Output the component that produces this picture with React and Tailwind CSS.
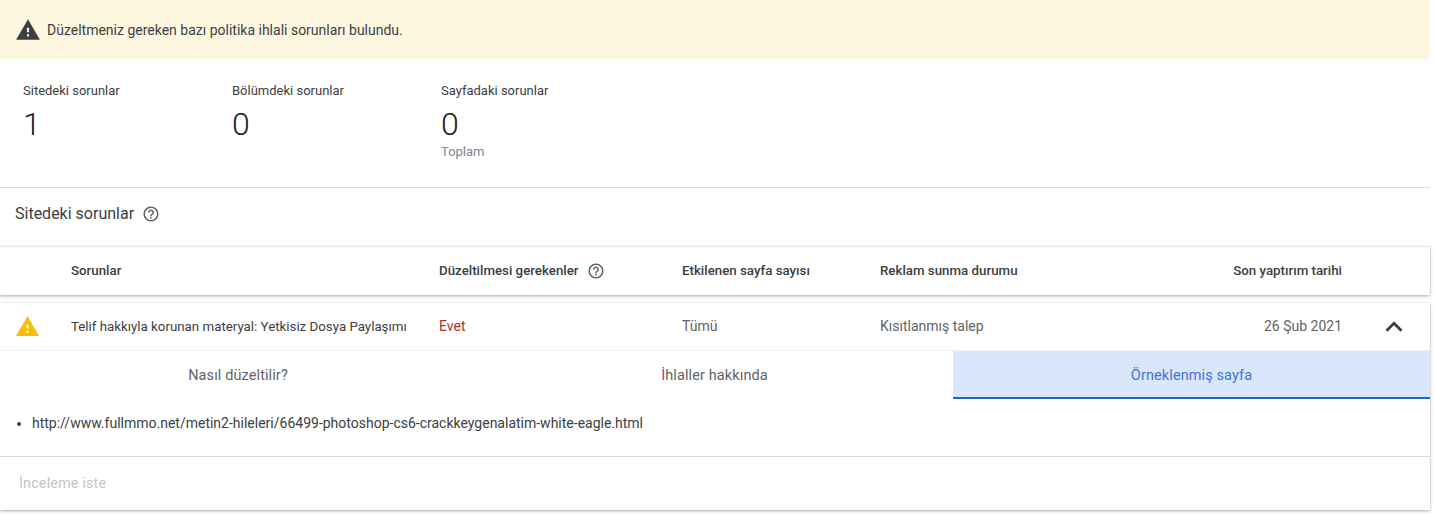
import React from 'react';

const Help = ({ className }) => (
  <svg viewBox="0 0 24 24" className={className} fill="#5f6368">
    <path d="M11 18h2v-2h-2v2zm1-16C6.48 2 2 6.48 2 12s4.48 10 10 10 10-4.48 10-10S17.52 2 12 2zm0 18c-4.41 0-8-3.59-8-8s3.59-8 8-8 8 3.59 8 8-3.59 8-8 8zm0-14c-2.21 0-4 1.79-4 4h2c0-1.1.9-2 2-2s2 .9 2 2c0 2-3 1.75-3 5h2c0-2.25 3-2.5 3-5 0-2.21-1.79-4-4-4z" />
  </svg>
);

const Warning = ({ fill, className }) => (
  <svg viewBox="0 0 24 24" className={className} fill={fill}>
    <path d="M1 21h22L12 2 1 21zm12-3h-2v-2h2v2zm0-4h-2v-4h2v4z" />
  </svg>
);

const Stat = ({ label, value, note }) => (
  <div className="w-[209px]">
    <div className="text-[13px] leading-[20px] text-[#3c4043]">{label}</div>
    <div className="mt-[3px] text-[32px] font-[350] leading-[40px] text-[#202124]">{value}</div>
    {note && <div className="text-[13px] leading-[16px] text-[#80868b]">{note}</div>}
  </div>
);

const App = () => {
  return (
    <div className="h-[516px] w-[1435px] overflow-hidden bg-white font-['Roboto',sans-serif]">
      <div className="w-[1430px]">
        <div className="flex h-[59px] items-center gap-[6px] bg-[#fef7e0] pl-[15px] text-[14px] text-[#3c4043]">
          <Warning fill="#3c4043" className="h-[26px] w-[26px]" />
          <span className="pt-[1px]">Düzeltmeniz gereken bazı politika ihlali sorunları bulundu.</span>
        </div>

        <div className="flex h-[129px] border-b border-[#dadce0] pl-[23px] pt-[22px]">
          <Stat label="Sitedeki sorunlar" value="1" />
          <Stat label="Bölümdeki sorunlar" value="0" />
          <Stat label="Sayfadaki sorunlar" value="0" note="Toplam" />
        </div>

        <div className="flex h-[59px] items-center gap-[8px] border-b border-[#f1f3f4] pb-[7px] pl-[15px] text-[16px] text-[#3c4043]">
          <span>Sitedeki sorunlar</span>
          <Help className="h-[18px] w-[18px]" />
        </div>

        <div className="flex h-[48px] items-center text-[13.3px] font-medium text-[#3c4043] shadow-[0_1px_3px_rgba(60,64,67,0.45)]">
          <div className="w-[439px] pl-[71px]">Sorunlar</div>
          <div className="flex w-[243px] items-center gap-[8px]">
            <span>Düzeltilmesi gerekenler</span>
            <Help className="h-[18px] w-[18px]" />
          </div>
          <div className="w-[198px]">Etkilenen sayfa sayısı</div>
          <div className="w-[200px]">Reklam sunma durumu</div>
          <div className="w-[262px] text-right">Son yaptırım tarihi</div>
        </div>

        <div className="mt-[8px] shadow-[0_1px_3px_rgba(60,64,67,0.45)]">
          <div className="flex h-[48px] items-center border-b border-[#f1f3f4] text-[14px] text-[#5f6368]">
            <div className="flex w-[71px] pb-[1px] pl-[15px]">
              <Warning fill="#fbbc04" className="h-[25px] w-[25px]" />
            </div>
            <div className="w-[368px] text-[13.3px] text-[#3c4043]">Telif hakkıyla korunan materyal: Yetkisiz Dosya Paylaşımı</div>
            <div className="w-[243px] text-[#a8322d]">Evet</div>
            <div className="w-[198px]">Tümü</div>
            <div className="w-[200px]">Kısıtlanmış talep</div>
            <div className="w-[262px] text-right">26 Şub 2021</div>
            <svg viewBox="0 0 24 24" className="ml-[35px] h-[34px] w-[34px]" fill="#3c4043">
              <path d="M12 8l-6 6 1.41 1.41L12 10.83l4.59 4.58L18 14z" />
            </svg>
          </div>

          <div className="flex h-[48px] text-[14.5px] font-[450] tracking-[0.1px] text-[#5f6368]">
            <div className="flex w-[476px] items-center justify-center pt-[2px]">Nasıl düzeltilir?</div>
            <div className="flex w-[477px] items-center justify-center pt-[2px]">İhlaller hakkında</div>
            <div className="flex w-[477px] items-center justify-center border-b-2 border-[#1967d2] bg-[#d9e7fa] pt-[4px] text-[#4274d9]">Örneklenmiş sayfa</div>
          </div>

          <ul className="flex h-[58px] list-disc items-center border-b border-[#dadce0] pb-[9px] pl-[32px] text-[14px] text-[#3c4043]">
            <li>http://www.fullmmo.net/metin2-hileleri/66499-photoshop-cs6-crackkeygenalatim-white-eagle.html</li>
          </ul>

          <div className="flex h-[53px] items-center pl-[19px] pt-[1px] text-[14.5px] font-[450] tracking-[0.1px] text-[#c4c6c9]">İnceleme iste</div>
        </div>
      </div>
    </div>
  );
};

export default App;
